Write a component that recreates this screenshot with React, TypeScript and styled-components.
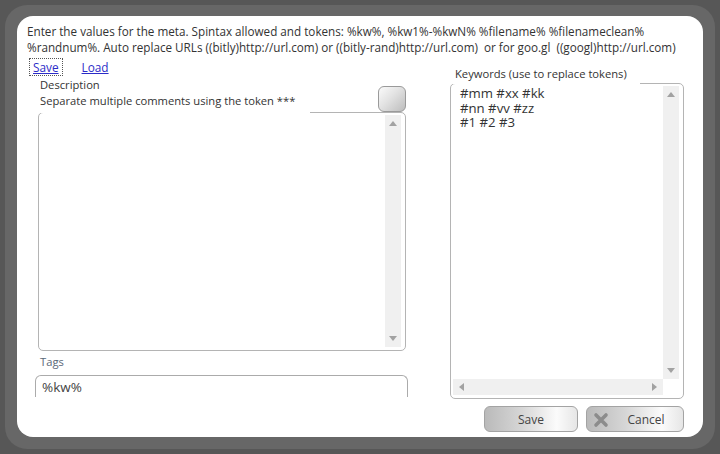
import styled, { createGlobalStyle } from 'styled-components'

const GlobalStyle = createGlobalStyle`
    html, body {
        margin: 0;
        padding: 0;
        background: #575757;
        font-family: "Open Sans", "Noto Sans", sans-serif;
    }
`

const Frame = styled.div`
    margin: 5px;
    width: 710px;
    height: 444px;
    box-sizing: border-box;
    padding: 11px 12px 12px 12px;
    background: #676767;
    border-radius: 22px;
`

const Panel = styled.div`
    height: 100%;
    box-sizing: border-box;
    background: #fff;
    border-radius: 16px;
    padding: 7px 19px 6px 10px;
    display: flex;
    flex-direction: column;
    color: #333;
    font-size: 11px;
`

const Intro = styled.div`
    line-height: 16px;
    height: 32px;
    white-space: nowrap;
    font-size: 11.7px;
`

const Body = styled.div`
    display: flex;
    gap: 42px;
`

const LeftColumn = styled.div`
    width: 381px;
    display: flex;
    flex-direction: column;
`

const RightColumn = styled.div`
    flex: 1;
    display: flex;
    flex-direction: column;
    padding-top: 10px;
`

const LinkRow = styled.div`
    display: flex;
    align-items: center;
    height: 18px;
    margin-top: 3px;
    padding-left: 2px;
    gap: 15px;
`

const LinkButton = styled.a<{ $focused?: boolean }>`
    color: #2b2bc8;
    text-decoration: underline;
    font-size: 11.8px;
    line-height: 16px;
    padding: 0 3px;
    border: 1px dotted ${p => (p.$focused ? '#555' : 'transparent')};
    cursor: pointer;
`

const HeaderRow = styled.div`
    display: flex;
    justify-content: space-between;
    align-items: flex-start;
    margin-top: 1px;
    position: relative;
    z-index: 1;
`

const GroupLabel = styled.div<{ $width: number; $indent: number; $bottom: number }>`
    width: ${p => p.$width}px;
    box-sizing: border-box;
    padding-left: ${p => p.$indent}px;
    padding-bottom: ${p => p.$bottom}px;
    background: #fff;
    line-height: 16px;
    white-space: nowrap;
    font-size: 11.2px;
`

const SquareButton = styled.div`
    width: 28px;
    height: 26px;
    box-sizing: border-box;
    margin-top: 9px;
    margin-right: 2px;
    border: 1px solid #9a9a9a;
    border-radius: 6px;
    background: linear-gradient(135deg, #fbfbfb 0%, #e2e2e2 45%, #bdbdbd 100%);
`

const TextBox = styled.div<{ $height: number; $hScroll?: boolean }>`
    height: ${p => p.$height}px;
    box-sizing: border-box;
    border: 1px solid #b4b4b4;
    border-radius: 5px;
    margin-top: -1px;
    padding: 2px 4px 3px 2px;
    display: grid;
    grid-template-columns: 1fr 16px;
    grid-template-rows: ${p => (p.$hScroll ? '1fr 16px' : '1fr')};
    background: #fff;
`

const DescBox = styled(TextBox)`
    margin-left: 11px;
    margin-right: 2px;
`

const TextContent = styled.div`
    padding: 0 0 0 7px;
    font-size: 13.2px;
    line-height: 14.5px;
    color: #333;
    white-space: pre;
`

const VScroll = styled.div`
    background: #f0f0f0;
    display: flex;
    flex-direction: column;
    justify-content: space-between;
    align-items: center;
    padding: 6px 0;
`

const HScroll = styled.div`
    background: #f0f0f0;
    display: flex;
    justify-content: space-between;
    align-items: center;
    padding: 0 6px;
`

const Corner = styled.div`
    background: #fff;
`

const Arrow = styled.div<{ $dir: 'up' | 'down' | 'left' | 'right' }>`
    width: 0;
    height: 0;
    ${p =>
        p.$dir === 'up'
            ? 'border-left: 4px solid transparent; border-right: 4px solid transparent; border-bottom: 5px solid #a2a2a2;'
            : p.$dir === 'down'
            ? 'border-left: 4px solid transparent; border-right: 4px solid transparent; border-top: 5px solid #a2a2a2;'
            : p.$dir === 'left'
            ? 'border-top: 4px solid transparent; border-bottom: 4px solid transparent; border-right: 5px solid #a2a2a2;'
            : 'border-top: 4px solid transparent; border-bottom: 4px solid transparent; border-left: 5px solid #a2a2a2;'}
`

const TagsLabel = styled.div`
    margin-top: 3px;
    padding-left: 13px;
    line-height: 16px;
    color: #5a6878;
    font-size: 11.2px;
`

const TagsInput = styled.div`
    margin-top: 5px;
    margin-left: 8px;
    height: 22px;
    box-sizing: border-box;
    border: 1px solid #ababab;
    border-bottom: none;
    border-radius: 6px 6px 0 0;
    padding: 2px 0 0 6px;
    font-size: 13.5px;
    line-height: 18px;
    color: #444;
`

const Footer = styled.div`
    display: flex;
    justify-content: flex-end;
    gap: 8px;
    margin-top: 7px;
`

const DialogButton = styled.div<{ $width: number }>`
    width: ${p => p.$width}px;
    height: 26px;
    box-sizing: border-box;
    border: 1px solid #a3a3a3;
    border-radius: 6px;
    background: linear-gradient(90deg, #bababa 0%, #d6d6d6 40%, #fbfbfb 78%, #e6e6e6 100%);
    display: flex;
    align-items: center;
    justify-content: center;
    font-size: 12px;
    color: #444;
    position: relative;
`

const CancelIcon = styled.svg`
    position: absolute;
    left: 6px;
    top: 5px;
`

const CancelText = styled.span`
    margin-left: 22px;
`

export default function App() {
    return (
        <>
            <GlobalStyle />
            <Frame>
                <Panel>
                    <Intro>
                        Enter the values for the meta. Spintax allowed and tokens: %kw%, %kw1%-%kwN% %filename% %filenameclean%
                        <br />
                        %randnum%. Auto replace URLs ((bitly)http://url.com) or ((bitly-rand)http://url.com)&nbsp; or for goo.gl&nbsp; ((googl)http://url.com)
                    </Intro>
                    <Body>
                        <LeftColumn>
                            <LinkRow>
                                <LinkButton $focused>Save</LinkButton>
                                <LinkButton>Load</LinkButton>
                            </LinkRow>
                            <HeaderRow>
                                <GroupLabel $width={283} $indent={13} $bottom={4}>
                                    Description
                                    <br />
                                    Separate multiple comments using the token ***
                                </GroupLabel>
                                <SquareButton />
                            </HeaderRow>
                            <DescBox $height={239}>
                                <TextContent />
                                <VScroll>
                                    <Arrow $dir="up" />
                                    <Arrow $dir="down" />
                                </VScroll>
                            </DescBox>
                            <TagsLabel>Tags</TagsLabel>
                            <TagsInput>%kw%</TagsInput>
                        </LeftColumn>
                        <RightColumn>
                            <HeaderRow>
                                <GroupLabel $width={190} $indent={5} $bottom={2}>
                                    Keywords (use to replace tokens)
                                </GroupLabel>
                            </HeaderRow>
                            <TextBox $height={316} $hScroll>
                                <TextContent>{'#mm #xx #kk\n#nn #vv #zz\n#1 #2 #3'}</TextContent>
                                <VScroll>
                                    <Arrow $dir="up" />
                                    <Arrow $dir="down" />
                                </VScroll>
                                <HScroll>
                                    <Arrow $dir="left" />
                                    <Arrow $dir="right" />
                                </HScroll>
                                <Corner />
                            </TextBox>
                        </RightColumn>
                    </Body>
                    <Footer>
                        <DialogButton $width={94}>Save</DialogButton>
                        <DialogButton $width={98}>
                            <CancelIcon width="16" height="16" viewBox="0 0 16 16">
                                <path d="M3 3 L13 13 M13 3 L3 13" stroke="#8c8c8c" strokeWidth="3.6" strokeLinecap="round" />
                            </CancelIcon>
                            <CancelText>Cancel</CancelText>
                        </DialogButton>
                    </Footer>
                </Panel>
            </Frame>
        </>
    )
}
